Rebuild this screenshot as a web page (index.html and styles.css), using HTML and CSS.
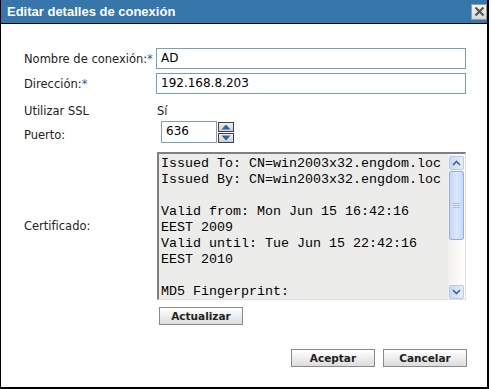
FILE: index.html
```html
<!DOCTYPE html>
<html lang="es">
<head>
<meta charset="utf-8">
<title>Editar detalles de conexión</title>
<link rel="stylesheet" href="styles.css">
</head>
<body>
<div class="dialog">
  <div class="titlebar">
    <span class="title">Editar detalles de conexión</span>
    <span class="close"><svg width="13" height="13" viewBox="0 0 13 13"><path d="M2.5 2.5 L10.5 10.5 M10.5 2.5 L2.5 10.5" stroke="#555" stroke-width="2.2" fill="none"/></svg></span>
  </div>
  <div class="content">
    <div class="row r1">
      <div class="label">Nombre de conexión:<span class="req">*</span></div>
      <div class="input">AD</div>
    </div>
    <div class="row r2">
      <div class="label">Dirección:<span class="req">*</span></div>
      <div class="input">192.168.8.203</div>
    </div>
    <div class="row r3">
      <div class="label">Utilizar SSL</div>
      <span class="value">Sí</span>
    </div>
    <div class="row r4">
      <div class="label">Puerto:</div>
      <div class="input port">636</div>
      <div class="spin">
        <span class="spinbtn"><svg width="14" height="8" viewBox="0 0 14 8"><path d="M2.5 6.5 L7 1.5 L11.5 6.5 Z" fill="#2d63a8"/></svg></span>
        <span class="spinbtn"><svg width="14" height="8" viewBox="0 0 14 8"><path d="M2.5 1.5 L7 6.5 L11.5 1.5 Z" fill="#2d63a8"/></svg></span>
      </div>
    </div>
    <div class="row r5">
      <div class="label">Certificado:</div>
      <div class="cert">
        <div class="certtext">Issued To: CN=win2003x32.engdom.loc
Issued By: CN=win2003x32.engdom.loc

Valid from: Mon Jun 15 16:42:16
EEST 2009
Valid until: Tue Jun 15 22:42:16
EEST 2010

MD5 Fingerprint:</div>
        <div class="scrollbar">
          <span class="sbtn"><svg width="9" height="6" viewBox="0 0 9 6"><path d="M1 5 L4.5 1.5 L8 5" stroke="#4d6185" stroke-width="1.6" fill="none"/></svg></span>
          <span class="thumb"><svg width="7" height="6" viewBox="0 0 7 6"><path d="M0 0.5H7M0 2.5H7M0 4.5H7" stroke="#a9c1ee" stroke-width="1"/></svg></span>
          <span class="track"></span>
          <span class="sbtn"><svg width="9" height="6" viewBox="0 0 9 6"><path d="M1 1 L4.5 4.5 L8 1" stroke="#4d6185" stroke-width="1.6" fill="none"/></svg></span>
        </div>
      </div>
    </div>
    <div class="row r6">
      <div class="label"></div>
      <button class="btn update">Actualizar</button>
    </div>
    <div class="footer">
      <button class="btn">Aceptar</button>
      <button class="btn">Cancelar</button>
    </div>
  </div>
</div>
</body>
</html>
```

FILE: styles.css
```css
html, body {
  margin: 0;
  padding: 0;
  background: #ffffff;
}
.dialog {
  width: 489px;
  height: 389px;
  box-sizing: border-box;
  border-left: 1px solid #000;
  border-right: 2px solid #000;
  border-bottom: 2px solid #000;
  background: #fff;
  font-family: "DejaVu Sans", sans-serif;
  font-size: 11.5px;
  color: #222;
}
.titlebar {
  height: 23px;
  background: #3676ab;
  border-bottom: 1px solid #000;
  display: flex;
  align-items: center;
  justify-content: space-between;
  padding: 0 0 0 6px;
}
.title {
  font-family: "Liberation Sans", sans-serif;
  font-weight: bold;
  font-size: 13px;
  color: #fff;
}
.close {
  width: 14px;
  height: 14px;
  border: 1px solid #9a9a9a;
  background: linear-gradient(#f4f4f4, #d8d8d8);
  display: flex;
  align-items: center;
  justify-content: center;
}
.content {
  padding: 24px 0 0 23px;
}
.row {
  display: flex;
  align-items: center;
}
.label {
  width: 132px;
  flex: none;
}
.req {
  color: #2a5db0;
}
.input {
  width: 310px;
  height: 21px;
  box-sizing: border-box;
  border: 1px solid #7f9db9;
  padding: 0 4px;
  font-size: 12px;
  line-height: 19px;
  color: #000;
}
.r2 {
  margin-top: 4px;
}
.r3 {
  height: 27px;
  align-items: flex-end;
  padding-bottom: 3px;
  box-sizing: border-box;
  line-height: 14px;
}
.value {
  padding-left: 1px;
}
.r4 {
  height: 22px;
}
.r4 .label {
  padding-top: 5px;
}
.port {
  width: 56px;
  height: 22px;
  margin-left: 5px;
}
.spin {
  display: flex;
  flex-direction: column;
  gap: 1px;
  margin-left: 1px;
}
.spinbtn {
  width: 14px;
  height: 8px;
  border: 1px solid #404040;
  background: linear-gradient(#f0f0f0, #cfcfcf);
  display: flex;
}
.r5 {
  margin-top: 9px;
}
.cert {
  width: 309px;
  height: 148px;
  border-top: 2px solid #808080;
  border-left: 2px solid #808080;
  border-right: 1px solid #e0e0e0;
  border-bottom: 1px solid #e0e0e0;
  background: #ececea;
  display: flex;
  box-sizing: border-box;
  margin-left: 1px;
}
.certtext {
  flex: 1;
  white-space: pre;
  overflow: hidden;
  font-family: "Liberation Mono", monospace;
  font-size: 13.33px;
  line-height: 16px;
  color: #000;
  padding: 2px 0 0 2px;
}
.scrollbar {
  width: 17px;
  display: flex;
  flex-direction: column;
  background: linear-gradient(90deg, #f3f1ec, #fefefe);
  padding-top: 2px;
}
.sbtn {
  height: 14px;
  width: 15px;
  margin-left: 1px;
  border: 1px solid #b6c9ee;
  border-radius: 2px;
  background: linear-gradient(90deg, #c8d8fb, #e6eefc);
  box-sizing: border-box;
  display: flex;
  align-items: center;
  justify-content: center;
}
.thumb {
  height: 69px;
  width: 15px;
  margin: 1px 0 0 1px;
  border: 1px solid #95aee5;
  border-radius: 2px;
  background: linear-gradient(90deg, #c5d6fc, #dde7fd 50%, #c7d8fb);
  box-sizing: border-box;
  display: flex;
  align-items: center;
  justify-content: center;
}
.track {
  flex: 1;
}
.btn {
  height: 18px;
  width: 84px;
  border: 1px solid #8a8a8a;
  background: linear-gradient(#ffffff, #dcdcdc);
  font-family: "DejaVu Sans", sans-serif;
  font-weight: bold;
  font-size: 10.5px;
  color: #222;
  padding: 0;
  margin: 0;
}
.r6 {
  margin-top: 7px;
}
.update {
  margin-left: 3px;
}
.footer {
  display: flex;
  justify-content: flex-end;
  gap: 8px;
  padding: 24px 20px 0 0;
}
```
